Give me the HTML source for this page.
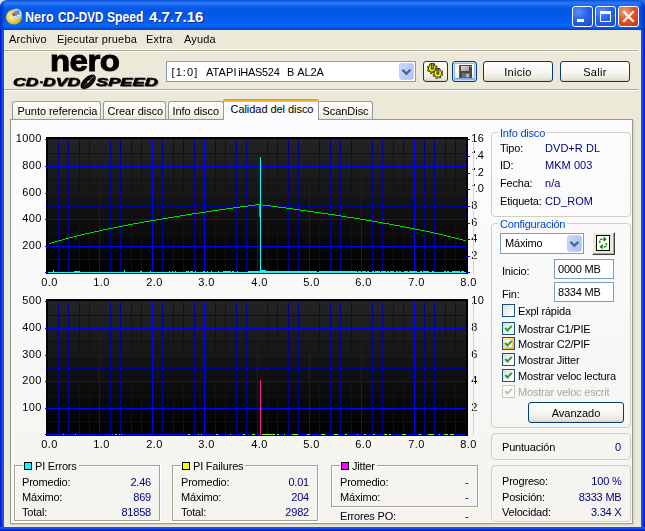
<!DOCTYPE html><html lang="es"><head><meta charset="utf-8"><title>Nero CD-DVD Speed 4.7.7.16</title><style>
*{box-sizing:border-box;margin:0;padding:0}
html,body{width:645px;height:531px;overflow:hidden}
body{position:relative;background:#ece9d8;font-family:"Liberation Sans",sans-serif;font-size:11px;color:#000;line-height:13px;cursor:default;letter-spacing:-0.2px}
.a{position:absolute;white-space:pre}
.navy{color:#000080}
.blue{color:#0046d5}
.r{text-align:right}
/* frame */
#cTL{left:0;top:0;width:8px;height:8px;background:linear-gradient(#cfdaf6,#f4f7fe)}
#cTR{left:637px;top:0;width:8px;height:8px;background:#3a6be0}
#title{left:0;top:0;width:645px;height:30px;border-radius:7px 7px 0 0;background:linear-gradient(180deg,#0a4fd8 0,#2a7cf8 3px,#1c6af2 5px,#0458ea 8px,#0456e8 14px,#055df0 20px,#0665fa 25px,#0560f0 27px,#0348cf 29px,#0240c4 30px)}
#titleSide{left:0;top:0;width:645px;height:30px;border-radius:7px 7px 0 0;background:linear-gradient(90deg,#0030c4 0,rgba(0,60,220,0) 5px,rgba(0,60,220,0) 639px,#0030c4 645px)}
#bl{left:0;top:30px;width:4px;height:501px;background:linear-gradient(90deg,#0014c4 0,#0522d0 1px,#0a48e2 2px,#0c5cee 3px,#0a56e6 4px)}
#br{left:641px;top:30px;width:4px;height:501px;background:linear-gradient(90deg,#0a56e6 0,#0c5cee 1px,#0a48e2 2px,#0522d0 3px,#0012b8 4px)}
#bb{left:0;top:527px;width:645px;height:4px;background:linear-gradient(180deg,#0a56e6 0,#0c5cee 1px,#0a48e2 2px,#0522d0 3px,#0012b8 4px)}
.tw{top:8px;font-weight:bold;font-size:14px;line-height:18px;letter-spacing:0;color:#fff;text-shadow:1px 1px 0 #0a2a8c;transform-origin:0 0}
.cap{top:6px;width:21px;height:21px;border:1px solid #fff;border-radius:3px;background:radial-gradient(circle at 30% 25%,#5a8ffb 0,#2c62ea 45%,#1a48d4 100%)}
#cmin{left:572px}#cmax{left:595px}
#cclose{left:618px;background:radial-gradient(circle at 30% 25%,#f3a284 0,#e2562d 42%,#c2360f 100%)}
/* menu */
.menu{top:33px;letter-spacing:.15px}
.hsep{left:4px;width:635px;height:2px;border-top:1px solid #aca899;border-bottom:1px solid #fff;border-right:1px solid #fff}
/* controls */
.combo{background:#fff;border:1px solid #7f9db9}
.ddb{width:15px;height:17px;border:1px solid #c3d1f9;border-radius:2.5px;background:linear-gradient(115deg,#cbd8fc,#b8caf9 55%,#aec2f7)}
.btn{border:1px solid #003c74;border-radius:3px;background:linear-gradient(180deg,#fff 0,#f6f5f0 55%,#e9e6da 88%,#d6d0c5 100%);text-align:center;letter-spacing:0}
.btn.def{box-shadow:0 0 0 1px #cadcf8 inset,0 0 0 2px #98b8ee inset,0 -1px 0 2px #7fa2e6 inset}
.edit{background:#fff;border:1px solid #7f9db9}
/* tabs */
.tab{top:101px;height:18px;border:1px solid #919b9c;border-bottom:none;border-radius:3px 3px 0 0;background:linear-gradient(180deg,#fff,#f4f3ee 70%,#ebe9dd);letter-spacing:-0.05px}
.tab span{position:absolute;top:3px;left:6px}
#tabsel{top:99px;height:21px;background:#fcfcfe;border-top:none;z-index:3}
#tabsel:before{content:"";position:absolute;left:-1px;right:-1px;top:0;height:3px;border-radius:3px 3px 0 0;background:linear-gradient(180deg,#e68b2c,#ffc73c);}
#page{left:14px;top:122px;width:618px;height:400px;background:linear-gradient(180deg,#fcfcfe 0,#f9f9fa 40%,#f4f3ee 100%)}
#panel{left:10px;top:119px;width:623px;height:405px;border:1px solid #919b9c;background:#fcfcfe;box-shadow:1px 1px 0 #d9d6c6,2px 2px 0 #e3e0d0}
.gb{border:1px solid #d0d0bf;border-radius:4px}
.gbt{background:#fafafb;padding:0 2px}
.egb{border:1px solid #a5a292;box-shadow:1px 1px 0 #fff, 1px 1px 0 #fff inset}
.sq{width:8px;height:8px;border:1px solid #000}
.cb{width:13px;height:13px;border:1px solid #1c5180;background:linear-gradient(135deg,#dcdcd7,#fff 80%)}
.cb svg{position:absolute;left:0;top:0}
svg.charts{position:absolute;left:0;top:0}
#root{position:absolute;left:0;top:0;width:645px;height:531px;overflow:hidden;opacity:.999;will-change:opacity}
</style></head><body>
<div id="root">
<div class="a" id="cTL"></div><div class="a" id="cTR"></div><div class="a" id="title"></div><div class="a" id="titleSide"></div>
<div class="a" id="bl"></div><div class="a" id="br"></div><div class="a" id="bb"></div>
<svg class="a" style="left:5px;top:7px" width="18" height="18" viewBox="0 0 18 18">
<defs><radialGradient id="disc" cx="40%" cy="45%" r="60%"><stop offset="0" stop-color="#fff6b0"/><stop offset=".5" stop-color="#f0dc50"/><stop offset="1" stop-color="#c8aa18"/></radialGradient></defs>
<ellipse cx="9" cy="10" rx="8" ry="7.6" fill="url(#disc)"/>
<circle cx="11.5" cy="6.8" r="4.9" fill="#e8e8ee" stroke="#b0b0b8" stroke-width=".8"/>
<path d="M8 8.5a3.6 3.6 0 0 1 7 -2.5 l-1.5 4.3z" fill="#38a0e0"/>
<path d="M9.2 4.2l3.6 4.6" stroke="#ff6a3c" stroke-width="1.3"/>
<circle cx="8.6" cy="7.6" r="1.1" fill="#c01010"/><circle cx="8.6" cy="5.3" r=".8" fill="#ffd000"/><circle cx="13.2" cy="4.2" r=".9" fill="#2a9a30"/><circle cx="12.8" cy="8.8" r="1" fill="#fff"/>
</svg>
<div class="a tw" style="left:25px;transform:scaleX(0.9)">Nero</div>
<div class="a tw" style="left:58px;transform:scaleX(0.835)">CD-DVD</div>
<div class="a tw" style="left:107.3px;transform:scaleX(0.87)">Speed</div>
<div class="a tw" style="left:149px;transform:scaleX(1.077)">4.7.7.16</div>
<div class="a cap" id="cmin"><div class="a" style="left:4px;top:12px;width:7px;height:3px;background:#fff"></div></div>
<div class="a cap" id="cmax"><div class="a" style="left:4px;top:4px;width:11px;height:11px;border:1px solid #fff;border-top-width:3px"></div></div>
<div class="a cap" id="cclose"><svg width="19" height="19" viewBox="0 0 19 19" style="position:absolute;left:0;top:0"><path d="M5 5l9 9M14 5l-9 9" stroke="#fff" stroke-width="2.2" stroke-linecap="square"/></svg></div>
<div class="a menu" style="left:9px">Archivo</div>
<div class="a menu" style="left:57px">Ejecutar prueba</div>
<div class="a menu" style="left:146px">Extra</div>
<div class="a menu" style="left:184px">Ayuda</div>
<div class="a" style="left:4px;top:49px;width:637px;height:1px;background:#fff"></div>
<div class="a hsep" style="top:50px"></div>
<div class="a hsep" style="top:89px"></div>
<div class="a" id="nero" style="left:50.4px;top:45.6px;font-weight:bold;font-size:30px;line-height:30px;letter-spacing:-0.5px;-webkit-text-stroke:1px #000;transform-origin:0 0;transform:scaleX(1.1)">nero</div>
<div class="a" id="cd" style="left:13.4px;top:76.2px;font-weight:bold;font-style:italic;font-size:11px;line-height:12px;transform-origin:0 0;letter-spacing:0;-webkit-text-stroke:.55px #000;text-shadow:.7px .8px 0 #8a8878;transform:scaleX(1.6)">CD</div>
<div class="a" id="dot" style="left:39.2px;top:76px;font-weight:bold;font-style:italic;font-size:11px;line-height:12px;transform-origin:0 0;letter-spacing:0;-webkit-text-stroke:.55px #000;text-shadow:.7px .8px 0 #8a8878;transform:scaleX(1.2)">·</div>
<div class="a" id="dvd" style="left:42.6px;top:76.2px;font-weight:bold;font-style:italic;font-size:11px;line-height:12px;transform-origin:0 0;letter-spacing:0;-webkit-text-stroke:.55px #000;text-shadow:.7px .8px 0 #8a8878;transform:scaleX(1.6)">DVD</div>
<div class="a" id="speed" style="left:96px;top:76.2px;font-weight:bold;font-style:italic;font-size:11px;line-height:12px;transform-origin:0 0;letter-spacing:0;-webkit-text-stroke:.55px #000;text-shadow:.7px .8px 0 #8a8878;transform:scaleX(1.66)">SPEED</div>
<svg class="a" style="left:79px;top:73px" width="18" height="18" viewBox="0 0 18 18"><ellipse cx="9.2" cy="8.85" rx="4.9" ry="9.3" transform="rotate(48 9.2 8.85)" fill="#0a0a0a"/><path d="M10.5 7.6 L14.6 3.6" stroke="#c8c8c8" stroke-width=".7"/><path d="M8.2 9.8 L5.2 12.8" stroke="#777" stroke-width=".6"/><ellipse cx="9.4" cy="8.700" rx=".8" ry="1.700" transform="rotate(48 9.400 8.700)" fill="#d8d8d0"/></svg>
<div class="a combo" style="left:166px;top:61px;width:250px;height:21px"></div>
<div class="a" style="left:171.5px;top:66px;letter-spacing:1.1px">[1:0]</div>
<div class="a" style="left:206px;top:66px;letter-spacing:0.1px">ATAPI</div>
<div class="a" style="left:238.2px;top:66px;letter-spacing:-0.3px">iHAS524</div>
<div class="a" style="left:287px;top:66px;letter-spacing:0px">B</div>
<div class="a" style="left:297.2px;top:66px;letter-spacing:-0.1px">AL2A</div>
<div class="a ddb" style="left:399px;top:63px"><svg width="15" height="17" viewBox="0 0 15 17" style="position:absolute;left:-1px;top:-1px"><path d="M3.400 6.700l4 4 4-4" stroke="#4d6185" stroke-width="2.300" fill="none"/></svg></div>
<div class="a btn" style="left:423px;top:61px;width:25px;height:21px"><svg width="23" height="19" viewBox="0 0 23 19" style="position:absolute;left:0;top:0"><g transform="translate(8.3 6.4)"><circle r="4.200" fill="#111" stroke="#111" stroke-width="2.400" stroke-dasharray="1.900 1.400"/><circle r="4.200" fill="none" stroke="#f0ea00" stroke-width="1.100" stroke-dasharray="0.900 2.400" stroke-dashoffset="-0.500"/><circle r="3.300" fill="#f0ea00"/><circle r="1.400" fill="#8a8400"/></g><g transform="translate(13.8 11.4)"><circle r="4.200" fill="#111" stroke="#111" stroke-width="2.400" stroke-dasharray="1.900 1.400"/><circle r="4.200" fill="none" stroke="#f0ea00" stroke-width="1.100" stroke-dasharray="0.900 2.400" stroke-dashoffset="-0.500"/><circle r="3.300" fill="#f0ea00"/><circle r="1.400" fill="#8a8400"/></g><rect x="7.500" y="1.300" width="1.800" height="5.400" fill="#9a9a9a" stroke="#222" stroke-width=".7"/><rect x="13" y="6.500" width="1.800" height="5.400" fill="#9a9a9a" stroke="#222" stroke-width=".7"/></svg></div>
<div class="a btn def" style="left:452px;top:61px;width:25px;height:21px"><svg width="23" height="19" viewBox="0 0 23 19" style="position:absolute;left:0;top:0" shape-rendering="crispEdges"><defs><linearGradient id="flab" x1="0" y1="0" x2="1" y2="1"><stop offset="0" stop-color="#dcdcdc"/><stop offset="1" stop-color="#9c9c9c"/></linearGradient></defs><rect x="6" y="3" width="13" height="13" fill="#484848"/><rect x="6" y="3" width="1" height="13" fill="#5c5c5c"/><rect x="8" y="4" width="8" height="5" fill="url(#flab)"/><rect x="9" y="11" width="8" height="5" fill="#6e6e6e"/><rect x="13" y="12" width="3" height="3" fill="#b4b4b4"/><rect x="17" y="4" width="1" height="1" fill="#eee"/></svg></div>
<div class="a btn" style="left:483px;top:61px;width:70px;height:21px;line-height:21px;letter-spacing:.3px">Inicio</div>
<div class="a btn" style="left:560px;top:61px;width:70px;height:21px;line-height:21px;letter-spacing:.3px">Salir</div>
<div class="a" id="panel" style="left:10px;top:119px;width:623px;height:405px"></div>
<div class="a" id="page" style=""></div>
<div class="a tab" style="left:12px;width:89px"><span style="left:4.5px">Punto referencia</span></div>
<div class="a tab" style="left:103px;width:63px"><span style="left:3.5px">Crear disco</span></div>
<div class="a tab" style="left:168px;width:56px"><span style="left:3.5px">Info disco</span></div>
<div class="a tab" style="left:317px;width:56px"><span style="left:4.5px">ScanDisc</span></div>
<div class="a tab" id="tabsel" style="left:223px;width:96px"><span style="left:6.500px;top:4px">Calidad del disco</span></div>
<svg class="charts" width="645" height="531" viewBox="0 0 645 531" shape-rendering="crispEdges">
<defs>
<linearGradient id="cg137" x1="0" y1="0" x2="0" y2="1"><stop offset="0" stop-color="#242424"/><stop offset="1" stop-color="#000"/></linearGradient>
<linearGradient id="cg299" x1="0" y1="0" x2="0" y2="1"><stop offset="0" stop-color="#242424"/><stop offset="1" stop-color="#000"/></linearGradient>
</defs>
<rect x="46" y="137" width="422" height="137" fill="#000"/>
<rect x="48" y="139" width="418" height="134" fill="url(#cg137)"/>
<path d="M58.5 139v134M68.5 139v134M79.5 139v134M89.5 139v134M110.5 139v134M120.5 139v134M131.5 139v134M141.5 139v134M162.5 139v134M173.5 139v134M183.5 139v134M194.5 139v134M215.5 139v134M225.5 139v134M236.5 139v134M246.5 139v134M267.5 139v134M277.5 139v134M288.5 139v134M298.5 139v134M319.5 139v134M330.5 139v134M340.5 139v134M351.5 139v134M372.5 139v134M382.5 139v134M393.5 139v134M403.5 139v134M424.5 139v134M434.5 139v134M445.5 139v134M455.5 139v134M46 259.5H466M46 233.5H466M46 206.5H466M46 179.5H466M46 153.5H466" stroke="#000098" stroke-width="1" fill="none"/>
<path d="M99.5 139v134M152.5 139v134M204.5 139v134M257.5 139v134M309.5 139v134M361.5 139v134M414.5 139v134M45 272.5H466M45 246.5H466M45 219.5H466M45 193.5H466M45 166.5H466M45 139.5H466" stroke="#0000ff" stroke-width="1" fill="none"/>
<path d="M466 272.5H470M466 264.5H468M466 256.5H470M466 248.5H468M466 239.5H470M466 231.5H468M466 223.5H470M466 214.5H468M466 206.5H470M466 198.5H468M466 189.5H470M466 181.5H468M466 173.5H470M466 164.5H468M466 156.5H470M466 148.5H468M466 139.5H470" stroke="#0000ff" stroke-width="1" fill="none"/>
<path d="M48.5 243.5L49.5 243.5L50.5 243.5L51.5 242.5L52.5 242.5L53.5 242.5L54.5 242.5L55.5 241.5L56.5 241.5L57.5 241.5L58.5 240.5L59.5 240.5L60.5 240.5L61.5 240.5L62.5 239.5L63.5 239.5L64.5 239.5L65.5 238.5L66.5 238.5L67.5 238.5L68.5 238.5L69.5 237.5L70.5 237.5L71.5 237.5L72.5 237.5L73.5 236.5L74.5 236.5L75.5 236.5L76.5 236.5L77.5 235.5L78.5 235.5L79.5 235.5L80.5 235.5L81.5 234.5L82.5 234.5L83.5 234.5L84.5 234.5L85.5 233.5L86.5 233.5L87.5 233.5L88.5 233.5L89.5 233.5L90.5 232.5L91.5 232.5L92.5 232.5L93.5 232.5L94.5 231.5L95.5 231.5L96.5 231.5L97.5 231.5L98.5 231.5L99.5 230.5L100.5 230.5L101.5 230.5L102.5 230.5L103.5 229.5L104.5 229.5L105.5 229.5L106.5 229.5L107.5 229.5L108.5 228.5L109.5 228.5L110.5 228.5L111.5 228.5L112.5 228.5L113.5 227.5L114.5 227.5L115.5 227.5L116.5 227.5L117.5 227.5L118.5 226.5L119.5 226.5L120.5 226.5L121.5 226.5L122.5 226.5L123.5 225.5L124.5 225.5L125.5 225.5L126.5 225.5L127.5 225.5L128.5 224.5L129.5 224.5L130.5 224.5L131.5 224.5L132.5 224.5L133.5 223.5L134.5 223.5L135.5 223.5L136.5 223.5L137.5 223.5L138.5 223.5L139.5 222.5L140.5 222.5L141.5 222.5L142.5 222.5L143.5 222.5L144.5 221.5L145.5 221.5L146.5 221.5L147.5 221.5L148.5 221.5L149.5 221.5L150.5 220.5L151.5 220.5L152.5 220.5L153.5 220.5L154.5 220.5L155.5 220.5L156.5 219.5L157.5 219.5L158.5 219.5L159.5 219.5L160.5 219.5L161.5 219.5L162.5 218.5L163.5 218.5L164.5 218.5L165.5 218.5L166.5 218.5L167.5 218.5L168.5 217.5L169.5 217.5L170.5 217.5L171.5 217.5L172.5 217.5L173.5 217.5L174.5 216.5L175.5 216.5L176.5 216.5L177.5 216.5L178.5 216.5L179.5 216.5L180.5 215.5L181.5 215.5L182.5 215.5L183.5 215.5L184.5 215.5L185.5 215.5L186.5 214.5L187.5 214.5L188.5 214.5L189.5 214.5L190.5 214.5L191.5 214.5L192.5 213.5L193.5 213.5L194.5 213.5L195.5 213.5L196.5 213.5L197.5 213.5L198.5 213.5L199.5 212.5L200.5 212.5L201.5 212.5L202.5 212.5L203.5 212.5L204.5 212.5L205.5 212.5L206.5 211.5L207.5 211.5L208.5 211.5L209.5 211.5L210.5 211.5L211.5 211.5L212.5 210.5L213.5 210.5L214.5 210.5L215.5 210.5L216.5 210.5L217.5 210.5L218.5 210.5L219.5 209.5L220.5 209.5L221.5 209.5L222.5 209.5L223.5 209.5L224.5 209.5L225.5 209.5L226.5 208.5L227.5 208.5L228.5 208.5L229.5 208.5L230.5 208.5L231.5 208.5L232.5 208.5L233.5 207.5L234.5 207.5L235.5 207.5L236.5 207.5L237.5 207.5L238.5 207.5L239.5 207.5L240.5 206.5L241.5 206.5L242.5 206.5L243.5 206.5L244.5 206.5L245.5 206.5L246.5 206.5L247.5 206.5L248.5 205.5L249.5 205.5L250.5 205.5L251.5 205.5L252.5 205.5L253.5 205.5L254.5 205.5L255.5 204.5L256.5 204.5L257.5 204.5L258.5 204.5L259.5 204.5V217M261.5 204.5L262.5 204.5L263.5 205.5L264.5 205.5L265.5 205.5L266.5 205.5L267.5 205.5L268.5 205.5L269.5 205.5L270.5 205.5L271.5 206.5L272.5 206.5L273.5 206.5L274.5 206.5L275.5 206.5L276.5 206.5L277.5 206.5L278.5 207.5L279.5 207.5L280.5 207.5L281.5 207.5L282.5 207.5L283.5 207.5L284.5 207.5L285.5 207.5L286.5 208.5L287.5 208.5L288.5 208.5L289.5 208.5L290.5 208.5L291.5 208.5L292.5 208.5L293.5 209.5L294.5 209.5L295.5 209.5L296.5 209.5L297.5 209.5L298.5 209.5L299.5 209.5L300.5 210.5L301.5 210.5L302.5 210.5L303.5 210.5L304.5 210.5L305.5 210.5L306.5 210.5L307.5 211.5L308.5 211.5L309.5 211.5L310.5 211.5L311.5 211.5L312.5 211.5L313.5 211.5L314.5 212.5L315.5 212.5L316.5 212.5L317.5 212.5L318.5 212.5L319.5 212.5L320.5 212.5L321.5 213.5L322.5 213.5L323.5 213.5L324.5 213.5L325.5 213.5L326.5 213.5L327.5 213.5L328.5 214.5L329.5 214.5L330.5 214.5L331.5 214.5L332.5 214.5L333.5 214.5L334.5 214.5L335.5 215.5L336.5 215.5L337.5 215.5L338.5 215.5L339.5 215.5L340.5 215.5L341.5 216.5L342.5 216.5L343.5 216.5L344.5 216.5L345.5 216.5L346.5 216.5L347.5 217.5L348.5 217.5L349.5 217.5L350.5 217.5L351.5 217.5L352.5 217.5L353.5 217.5L354.5 218.5L355.5 218.5L356.5 218.5L357.5 218.5L358.5 218.5L359.5 218.5L360.5 219.5L361.5 219.5L362.5 219.5L363.5 219.5L364.5 219.5L365.5 219.5L366.5 220.5L367.5 220.5L368.5 220.5L369.5 220.5L370.5 220.5L371.5 220.5L372.5 221.5L373.5 221.5L374.5 221.5L375.5 221.5L376.5 221.5L377.5 221.5L378.5 222.5L379.5 222.5L380.5 222.5L381.5 222.5L382.5 222.5L383.5 223.5L384.5 223.5L385.5 223.5L386.5 223.5L387.5 223.5L388.5 223.5L389.5 224.5L390.5 224.5L391.5 224.5L392.5 224.5L393.5 224.5L394.5 225.5L395.5 225.5L396.5 225.5L397.5 225.5L398.5 225.5L399.5 225.5L400.5 226.5L401.5 226.5L402.5 226.5L403.5 226.5L404.5 226.5L405.5 227.5L406.5 227.5L407.5 227.5L408.5 227.5L409.5 227.5L410.5 228.5L411.5 228.5L412.5 228.5L413.5 228.5L414.5 228.5L415.5 229.5L416.5 229.5L417.5 229.5L418.5 229.5L419.5 229.5L420.5 230.5L421.5 230.5L422.5 230.5L423.5 230.5L424.5 230.5L425.5 231.5L426.5 231.5L427.5 231.5L428.5 231.5L429.5 231.5L430.5 232.5L431.5 232.5L432.5 232.5L433.5 232.5L434.5 233.5L435.5 233.5L436.5 233.5L437.5 233.5L438.5 233.5L439.5 234.5L440.5 234.5L441.5 234.5L442.5 234.5L443.5 235.5L444.5 235.5L445.5 235.5L446.5 235.5L447.5 236.5L448.5 236.5L449.5 236.5L450.5 236.5L451.5 237.5L452.5 237.5L453.5 237.5L454.5 237.5L455.5 238.5L456.5 238.5L457.5 238.5L458.5 238.5L459.5 239.5L460.5 239.5L461.5 239.5L462.5 239.5L463.5 240.5L464.5 240.5L465.5 240.5" stroke="#00dc00" stroke-width="1.15" fill="none" stroke-linejoin="round"/>
<path d="M48 272.5H466M53 271.5h1M74 271.5h6M124 271.5h1M140 271.5h2M150 271.5h1M169 271.5h1M172 271.5h1M175 271.5h1M186 271.5h3M190 271.5h3M195 271.5h1M203 271.5h2M207 271.5h1M211 271.5h1M218 271.5h1M223 271.5h8M232 271.5h2M237 271.5h1M248 271.5h12M261 271.5h56M319 271.5h38M358 271.5h3M362 271.5h4M367 271.5h2M372 271.5h2M375 271.5h5M381 271.5h5M387 271.5h2M390 271.5h4M396 271.5h2M399 271.5h2M404 271.5h4M409 271.5h8M420 271.5h2M423 271.5h6M432 271.5h2M444 271.5h2M447 271.5h2M452 271.5h8M461 271.5h3M261 270.5h5M53.5 270v1M124.5 270v1M260.5 157V273" stroke="#00ffff" stroke-width="1" fill="none"/>
<rect x="46" y="299" width="422" height="137" fill="#000"/>
<rect x="48" y="301" width="418" height="134" fill="url(#cg299)"/>
<path d="M58.5 301v134M68.5 301v134M79.5 301v134M89.5 301v134M110.5 301v134M120.5 301v134M131.5 301v134M141.5 301v134M162.5 301v134M173.5 301v134M183.5 301v134M194.5 301v134M215.5 301v134M225.5 301v134M236.5 301v134M246.5 301v134M267.5 301v134M277.5 301v134M288.5 301v134M298.5 301v134M319.5 301v134M330.5 301v134M340.5 301v134M351.5 301v134M372.5 301v134M382.5 301v134M393.5 301v134M403.5 301v134M424.5 301v134M434.5 301v134M445.5 301v134M455.5 301v134M46 421.5H466M46 395.5H466M46 368.5H466M46 341.5H466M46 315.5H466" stroke="#000098" stroke-width="1" fill="none"/>
<path d="M99.5 301v134M152.5 301v134M204.5 301v134M257.5 301v134M309.5 301v134M361.5 301v134M414.5 301v134M45 434.5H466M45 408.5H466M45 381.5H466M45 355.5H466M45 328.5H466M45 301.5H466" stroke="#0000ff" stroke-width="1" fill="none"/>
<path d="M260.5 380V435" stroke="#ff1493" stroke-width="1" fill="none"/>
<path d="M63 434.5h1M75 434.5h1M115 434.5h2M119 434.5h1M121 434.5h1M188 434.5h2M198 434.5h1M201 434.5h1M216 434.5h2M230 434.5h1M243 434.5h2M252 434.5h3M262 434.5h13M277 434.5h2M284 434.5h1M292 434.5h6M307 434.5h3M321 434.5h4M334 434.5h4M345 434.5h2M357 434.5h1M364 434.5h2M373 434.5h2M384 434.5h3M389 434.5h2M402 434.5h4M419 434.5h2M428 434.5h6M439 434.5h1M444 434.5h4M450 434.5h4" stroke="#80ff00" stroke-width="1" fill="none"/>
<g font-family="Liberation Sans, sans-serif" font-size="11" fill="#000" shape-rendering="auto" letter-spacing=".4"><text x="41.9" y="248.6" text-anchor="end">200</text><text x="41.9" y="221.6" text-anchor="end">400</text><text x="41.9" y="195.6" text-anchor="end">600</text><text x="41.9" y="168.6" text-anchor="end">800</text><text x="41.9" y="141.6" text-anchor="end">1000</text><text x="41.9" y="410.6" text-anchor="end">100</text><text x="41.9" y="383.6" text-anchor="end">200</text><text x="41.9" y="357.6" text-anchor="end">300</text><text x="41.9" y="330.6" text-anchor="end">400</text><text x="41.9" y="303.6" text-anchor="end">500</text><text x="57.75" y="286" text-anchor="end">0.0</text><text x="57.75" y="448" text-anchor="end">0.0</text><text x="109.75" y="286" text-anchor="end">1.0</text><text x="109.75" y="448" text-anchor="end">1.0</text><text x="162.75" y="286" text-anchor="end">2.0</text><text x="162.75" y="448" text-anchor="end">2.0</text><text x="214.75" y="286" text-anchor="end">3.0</text><text x="214.75" y="448" text-anchor="end">3.0</text><text x="267.75" y="286" text-anchor="end">4.0</text><text x="267.75" y="448" text-anchor="end">4.0</text><text x="319.75" y="286" text-anchor="end">5.0</text><text x="319.75" y="448" text-anchor="end">5.0</text><text x="371.75" y="286" text-anchor="end">6.0</text><text x="371.75" y="448" text-anchor="end">6.0</text><text x="424.75" y="286" text-anchor="end">7.0</text><text x="424.75" y="448" text-anchor="end">7.0</text><text x="476.75" y="286" text-anchor="end">8.0</text><text x="476.75" y="448" text-anchor="end">8.0</text><text x="471.2" y="259" text-anchor="start">2</text><text x="471.2" y="242" text-anchor="start">4</text><text x="471.2" y="226" text-anchor="start">6</text><text x="471.2" y="209" text-anchor="start">8</text><text x="471.2" y="192" text-anchor="start">10</text><text x="471.2" y="176" text-anchor="start">12</text><text x="471.2" y="159" text-anchor="start">14</text><text x="471.2" y="142" text-anchor="start">16</text><text x="471.2" y="411" text-anchor="start">2</text><text x="471.2" y="384" text-anchor="start">4</text><text x="471.2" y="358" text-anchor="start">6</text><text x="471.2" y="331" text-anchor="start">8</text><text x="471.2" y="304" text-anchor="start">10</text></g>
<rect x="470.5" y="186" width="5.5" height="7" fill="#fbfbfc"/><rect x="470.5" y="170" width="5.5" height="7" fill="#fbfbfc"/><rect x="470.5" y="153" width="5.5" height="7" fill="#fbfbfc"/>
<path d="M473.5 139V273M473.5 301V435" stroke="#d2d2ce" stroke-width="1" fill="none"/>
</svg>
<div class="a gb" style="left:491px;top:132px;width:140px;height:85px"></div>
<div class="a gbt blue" style="left:498px;top:127px">Info disco</div>
<div class="a" style="left:500px;top:142px">Tipo:</div>
<div class="a navy" style="left:545px;top:142px;letter-spacing:.05px">DVD+R DL</div>
<div class="a" style="left:500px;top:159px">ID:</div>
<div class="a navy" style="left:545px;top:159px;letter-spacing:.05px">MKM 003</div>
<div class="a" style="left:500px;top:177px">Fecha:</div>
<div class="a navy" style="left:545px;top:177px;letter-spacing:.05px">n/a</div>
<div class="a" style="left:500px;top:195px">Etiqueta:</div>
<div class="a navy" style="left:545px;top:195px;letter-spacing:.05px">CD_ROM</div>
<div class="a gb" style="left:491px;top:223px;width:140px;height:205px"></div>
<div class="a gbt blue" style="left:498px;top:218px">Configuración</div>
<div class="a combo" style="left:500px;top:233px;width:84px;height:21px"></div>
<div class="a" style="left:505px;top:237px">Máximo</div>
<div class="a ddb" style="left:567px;top:235px"><svg width="15" height="17" viewBox="0 0 15 17" style="position:absolute;left:-1px;top:-1px"><path d="M3.400 6.700l4 4 4-4" stroke="#4d6185" stroke-width="2.300" fill="none"/></svg></div>
<div class="a" style="left:592px;top:232px;width:23px;height:23px;background:#ece9d8;border:1px solid;border-color:#fff #404040 #404040 #fff;box-shadow:-1px -1px 0 #aca899 inset"><svg width="21" height="21" viewBox="0 0 21 21" style="position:absolute;left:0;top:0"><rect x="3.500" y="2.500" width="13" height="15" fill="#fff" stroke="#000" shape-rendering="crispEdges"/><g stroke="#0a8a0a" stroke-width="1.500" fill="none"><path d="M6.800 10v-1.800q0-2 2-2h2" stroke-dasharray="2.200 .8"/><path d="M13.400 10v1.800q0 2-2 2h-2" stroke-dasharray="2.200 .8"/></g><path d="M10.500 3.400l3.300 2.800-3.300 2.800z" fill="#0a8a0a"/><path d="M9.700 11l-3.300 2.800 3.300 2.800z" fill="#0a8a0a"/></svg></div>
<div class="a" style="left:502px;top:265px">Inicio:</div>
<div class="a edit" style="left:554px;top:259px;width:60px;height:20px"></div>
<div class="a" style="left:558px;top:263px">0000 MB</div>
<div class="a" style="left:502px;top:288px">Fin:</div>
<div class="a edit" style="left:554px;top:282px;width:60px;height:20px"></div>
<div class="a" style="left:558px;top:286px">8334 MB</div>
<div class="a cb" style="left:502px;top:304px"></div>
<div class="a" style="left:518px;top:305px">Expl rápida</div>
<div class="a cb" style="left:502px;top:322px"><svg width="11" height="11" viewBox="0 0 11 11"><path d="M2.200 5l2.300 2.500 4.300-4.700" stroke="#21a121" stroke-width="1.900" fill="none"/></svg></div>
<div class="a" style="left:518px;top:323px">Mostrar C1/PIE</div>
<div class="a cb" style="left:502px;top:337px;background:linear-gradient(135deg,#fff2c4,#fbd069 50%,#f9b42c)"><div class="a" style="left:2px;top:2px;width:7px;height:7px;background:linear-gradient(135deg,#eeeeea,#fff)"></div><svg width="11" height="11" viewBox="0 0 11 11"><path d="M2.200 5l2.300 2.500 4.300-4.700" stroke="#21a121" stroke-width="1.900" fill="none"/></svg></div>
<div class="a" style="left:518px;top:338px">Mostrar C2/PIF</div>
<div class="a cb" style="left:502px;top:353px"><svg width="11" height="11" viewBox="0 0 11 11"><path d="M2.200 5l2.300 2.500 4.300-4.700" stroke="#21a121" stroke-width="1.900" fill="none"/></svg></div>
<div class="a" style="left:518px;top:354px">Mostrar Jitter</div>
<div class="a cb" style="left:502px;top:369px"><svg width="11" height="11" viewBox="0 0 11 11"><path d="M2.200 5l2.300 2.500 4.300-4.700" stroke="#21a121" stroke-width="1.900" fill="none"/></svg></div>
<div class="a" style="left:518px;top:370px">Mostrar veloc lectura</div>
<div class="a cb" style="left:502px;top:385px;border-color:#cac8bb;background:#fbfbf8"><svg width="11" height="11" viewBox="0 0 11 11"><path d="M2.200 5l2.300 2.500 4.300-4.700" stroke="#c2c0b4" stroke-width="1.900" fill="none"/></svg></div>
<div class="a" style="left:518px;top:386px;color:#aca899">Mostrar veloc escrit</div>
<div class="a btn" style="left:528px;top:402px;width:96px;height:21px;line-height:21px">Avanzado</div>
<div class="a gb" style="left:491px;top:433px;width:140px;height:27px"></div>
<div class="a" style="left:502px;top:441px">Puntuación</div>
<div class="a navy r" style="left:560px;top:441px;width:61px">0</div>
<div class="a gb" style="left:491px;top:465px;width:140px;height:57px"></div>
<div class="a" style="left:502px;top:475px">Progreso:</div>
<div class="a navy r" style="left:560px;top:475px;width:61.500px">100 %</div>
<div class="a" style="left:502px;top:491px">Posición:</div>
<div class="a navy r" style="left:560px;top:491px;width:61.500px">8333 MB</div>
<div class="a" style="left:502px;top:506px">Velocidad:</div>
<div class="a navy r" style="left:560px;top:506px;width:61.500px">3.34 X</div>
<div class="a egb" style="left:14px;top:465px;width:146px;height:56px"></div>
<div class="a" style="left:23px;top:460px;height:12px;padding:0 2px 0 12px;background:#f5f4f0">PI Errors</div>
<div class="a sq" style="left:24px;top:462px;background:#00ffff"></div>
<div class="a" style="left:22px;top:476px">Promedio:</div>
<div class="a navy r" style="left:91px;top:476px;width:60px">2.46</div>
<div class="a" style="left:22px;top:491px">Máximo:</div>
<div class="a navy r" style="left:91px;top:491px;width:60px">869</div>
<div class="a" style="left:22px;top:506px">Total:</div>
<div class="a navy r" style="left:91px;top:506px;width:60px">81858</div>
<div class="a egb" style="left:172px;top:465px;width:146px;height:56px"></div>
<div class="a" style="left:181px;top:460px;height:12px;padding:0 2px 0 12px;background:#f5f4f0">PI Failures</div>
<div class="a sq" style="left:182px;top:462px;background:#ffff00"></div>
<div class="a" style="left:181px;top:476px">Promedio:</div>
<div class="a navy r" style="left:249px;top:476px;width:60px">0.01</div>
<div class="a" style="left:181px;top:491px">Máximo:</div>
<div class="a navy r" style="left:249px;top:491px;width:60px">204</div>
<div class="a" style="left:181px;top:506px">Total:</div>
<div class="a navy r" style="left:249px;top:506px;width:60px">2982</div>
<div class="a egb" style="left:331px;top:465px;width:147px;height:42px"></div>
<div class="a" style="left:340px;top:460px;height:12px;padding:0 2px 0 12px;background:#f5f4f0">Jitter</div>
<div class="a sq" style="left:341px;top:462px;background:#ff00ff"></div>
<div class="a" style="left:340px;top:476px">Promedio:</div>
<div class="a navy r" style="left:408.5px;top:476px;width:60px">-</div>
<div class="a" style="left:340px;top:491px">Máximo:</div>
<div class="a navy r" style="left:408.5px;top:491px;width:60px">-</div>
<div class="a" style="left:340px;top:510px">Errores PO:</div>
<div class="a navy r" style="left:408.500px;top:510px;width:60px">-</div>
</div></body></html>
